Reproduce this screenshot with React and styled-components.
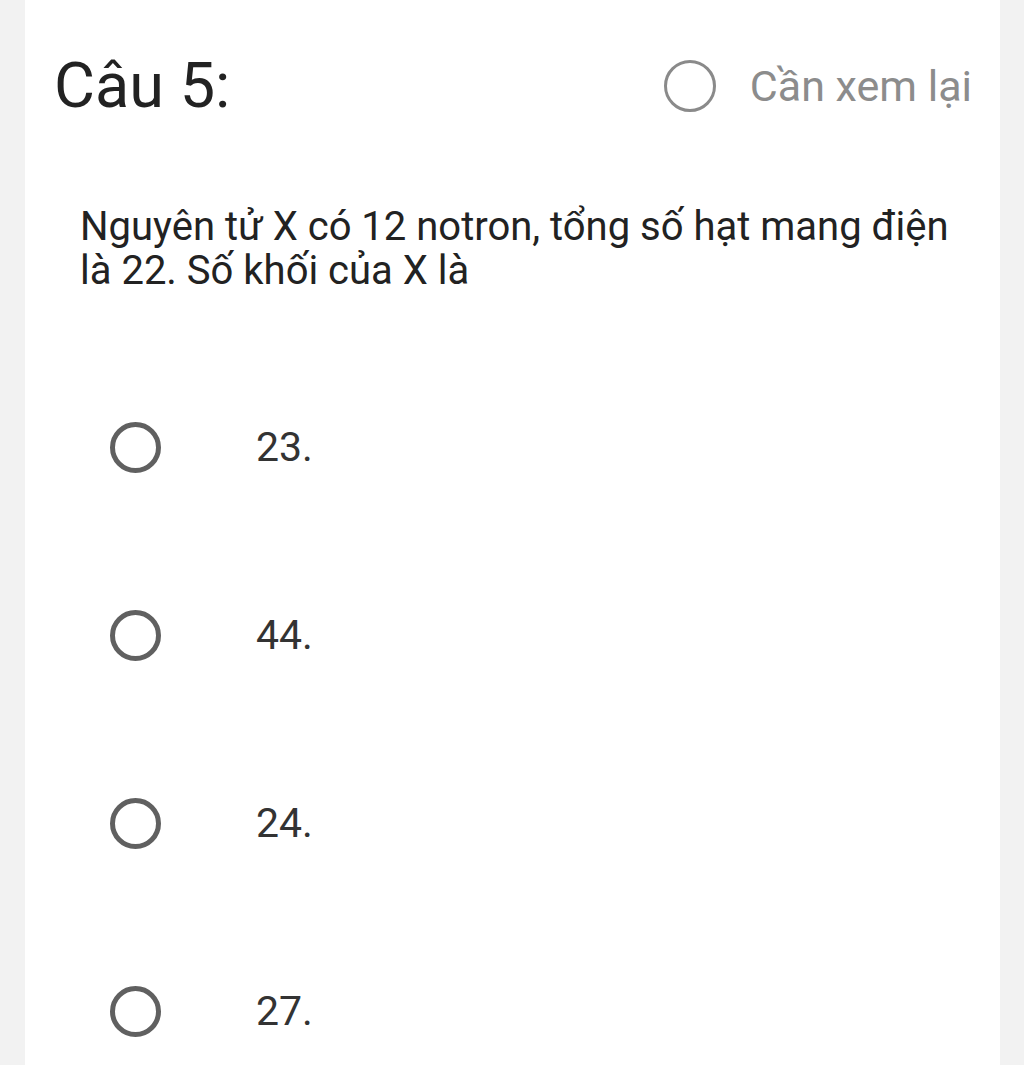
import styled, { createGlobalStyle } from "styled-components";

const GlobalStyle = createGlobalStyle`
  body {
    margin: 0;
    background: #f2f2f2;
    font-family: Roboto, "Noto Sans", sans-serif;
  }
`;

const Card = styled.div`
  margin: 0 24px 0 25px;
  min-height: 1065px;
  box-sizing: border-box;
  background: #ffffff;
  padding: 56px 28px 0 29px;
`;

const Header = styled.div`
  display: flex;
  align-items: center;
  justify-content: space-between;
  height: 60px;
`;

const Title = styled.h2`
  margin: 0;
  font-size: 63px;
  line-height: 60px;
  font-weight: 400;
  color: #222;
`;

const ReviewToggle = styled.label`
  display: flex;
  align-items: center;
  gap: 34px;
  color: #8c8c8c;
  font-size: 43px;
  cursor: pointer;
`;

const Radio = styled.span`
  display: inline-block;
  box-sizing: border-box;
  width: ${(p) => p.size}px;
  height: ${(p) => p.size}px;
  border-radius: 50%;
  border: ${(p) => p.stroke}px solid ${(p) => p.color};
  flex-shrink: 0;
`;

const Question = styled.p`
  margin: 89px 0 0;
  padding-left: 26px;
  font-size: 40px;
  line-height: 44px;
  color: #222;
`;

const Options = styled.div`
  margin-top: 60px;
  display: flex;
  flex-direction: column;
`;

const OptionRow = styled.div`
  height: 188px;
  display: flex;
  align-items: center;
  padding-left: 56px;
  gap: 95px;
  cursor: pointer;
`;

const OptionText = styled.span`
  font-size: 41px;
  color: #333;
`;

const answers = ["23.", "44.", "24.", "27."];

export default function App() {
  return (
    <>
      <GlobalStyle />
      <Card>
        <Header>
          <Title>Câu 5:</Title>
          <ReviewToggle>
            <Radio size={52} stroke={3} color="#8a8a8a" />
            Cần xem lại
          </ReviewToggle>
        </Header>
        <Question>
          Nguyên tử X có 12 notron, tổng số hạt mang điện là 22. Số khối của X là
        </Question>
        <Options>
          {answers.map((a) => (
            <OptionRow key={a}>
              <Radio size={51} stroke={5} color="#606060" />
              <OptionText>{a}</OptionText>
            </OptionRow>
          ))}
        </Options>
      </Card>
    </>
  );
}
